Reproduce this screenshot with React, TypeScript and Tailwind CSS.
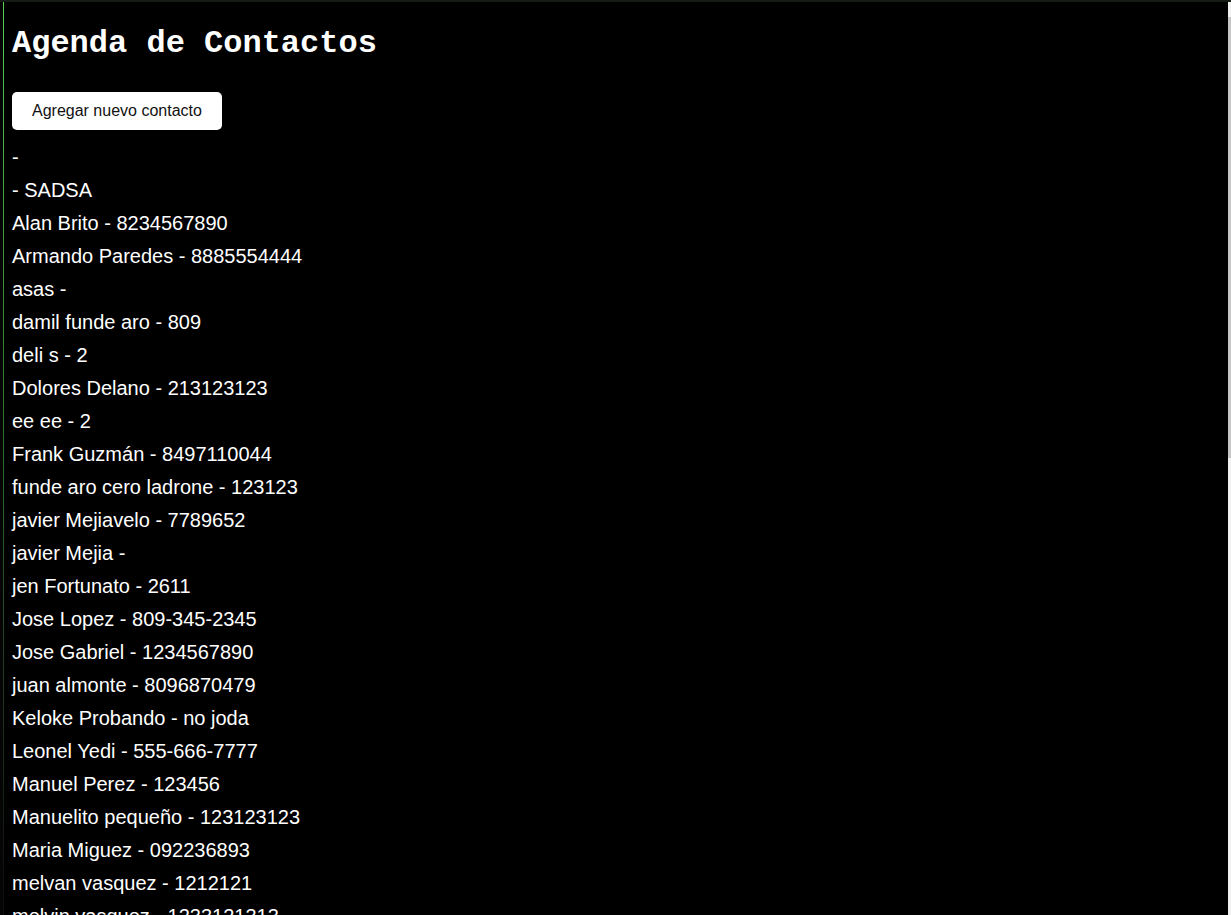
import React from "react";

const contactos = [
  "-",
  "- SADSA",
  "Alan Brito - 8234567890",
  "Armando Paredes - 8885554444",
  "asas -",
  "damil funde aro - 809",
  "deli s - 2",
  "Dolores Delano - 213123123",
  "ee ee - 2",
  "Frank Guzmán - 8497110044",
  "funde aro cero ladrone - 123123",
  "javier Mejiavelo - 7789652",
  "javier Mejia -",
  "jen Fortunato - 2611",
  "Jose Lopez - 809-345-2345",
  "Jose Gabriel - 1234567890",
  "juan almonte - 8096870479",
  "Keloke Probando - no joda",
  "Leonel Yedi - 555-666-7777",
  "Manuel Perez - 123456",
  "Manuelito pequeño - 123123123",
  "Maria Miguez - 092236893",
  "melvan vasquez - 1212121",
  "melvin vasquez - 1233121313",
];

export default function App() {
  return (
    <div className="h-screen overflow-hidden bg-black border-t-2 border-[#161b16] flex">
      <div className="w-[3px] bg-[#050505]" />
      <div className="w-px bg-gradient-to-b from-[#52d152] via-[#2f6a2f] to-[#0c0c0c]" />

      <main className="flex-1 px-2 text-white font-['Liberation_Sans',Arial,sans-serif]">
        <h1 className="mt-[23.5px] mb-[20.5px] text-[32px] font-bold leading-[36px] font-['Liberation_Mono','Courier_New',monospace]">
          Agenda de Contactos
        </h1>

        <button className="mt-[10px] mb-[11px] rounded-[5px] bg-white px-5 py-[10px] text-[16px] leading-[18px] text-[#111]">
          Agregar nuevo contacto
        </button>

        <ul>
          {contactos.map((c, i) => (
            <li key={i} className="py-[5px] text-[20px] leading-[23px]">
              {c}
            </li>
          ))}
        </ul>
      </main>

      <div className="w-[3px] flex flex-col">
        <div className="h-[15px] bg-[#f1f1f1]" />
        <div className="h-[441px] bg-[#c6c6c6]" />
        <div className="flex-1 bg-[#f1f1f1]" />
      </div>
    </div>
  );
}
